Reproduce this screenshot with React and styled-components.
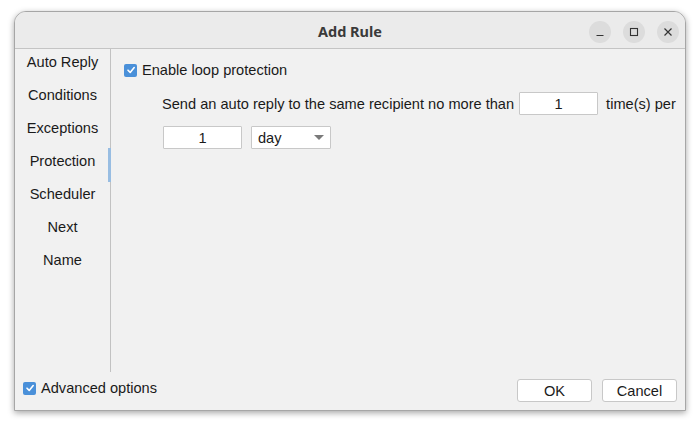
import React from 'react'
import styled, { createGlobalStyle } from 'styled-components'

const Global = createGlobalStyle`
  body {
    margin: 0;
    background: #ffffff;
    font-family: 'Liberation Sans', Arial, sans-serif;
    font-size: 14.6px;
    color: #1a1a1a;
  }
`

const Page = styled.div`
  width: 700px;
  height: 428px;
  padding: 11px 14px 0 14px;
  box-sizing: border-box;
`

const Window = styled.div`
  width: 672px;
  height: 400px;
  display: flex;
  flex-direction: column;
  background: #f1f1f1;
  border: 1px solid #a6a6a6;
  border-radius: 12px 12px 0 0;
  box-sizing: border-box;
  box-shadow: 0 2px 6px rgba(0, 0, 0, 0.35);
  overflow: hidden;
`

const TitleBar = styled.div`
  height: 37px;
  flex: none;
  display: grid;
  grid-template-columns: 1fr auto 1fr;
  align-items: center;
  background: #ebebeb;
  border-bottom: 1px solid #c4c4c4;
  box-sizing: border-box;
`

const Title = styled.div`
  grid-column: 2;
  font-family: 'Noto Sans', 'Open Sans', sans-serif;
  font-weight: 700;
  font-size: 14.5px;
  color: #3a3a3a;
  padding-top: 1px;
`

const Controls = styled.div`
  grid-column: 3;
  justify-self: end;
  display: flex;
  gap: 12px;
  padding-right: 6px;
  padding-top: 4px;
`

const CtrlButton = styled.div`
  width: 22px;
  height: 22px;
  border-radius: 50%;
  background: #dcdcdc;
  display: flex;
  align-items: center;
  justify-content: center;
`

const Body = styled.div`
  flex: 1;
  display: flex;
  flex-direction: column;
`

const Top = styled.div`
  display: flex;
  height: 323px;
`

const Sidebar = styled.div`
  width: 95px;
  flex: none;
  border-right: 1px solid #c2c2c2;
  display: flex;
  flex-direction: column;
`

const NavItem = styled.div`
  position: relative;
  height: 33px;
  padding-bottom: 8px;
  box-sizing: border-box;
  display: flex;
  align-items: center;
  justify-content: center;
  color: #1a1a1a;

  &::after {
    content: '';
    display: ${p => (p.$active ? 'block' : 'none')};
    position: absolute;
    right: -1px;
    top: 0;
    width: 3px;
    height: 34px;
    background: #98bde2;
  }
`

const Content = styled.div`
  flex: 1;
  padding: 13px 0 0 13px;
  display: flex;
  flex-direction: column;
`

const CheckRow = styled.label`
  display: flex;
  align-items: center;
  gap: 5px;
  height: 16px;
  margin-top: ${p => p.$mt || 0}px;
`

const Box = styled.span`
  width: 13px;
  height: 13px;
  border-radius: 2px;
  background: #4a90d9;
  display: flex;
  align-items: center;
  justify-content: center;
`

const Options = styled.div`
  padding: 14px 0 0 38px;
  display: flex;
  flex-direction: column;
  gap: 11px;
`

const Line = styled.div`
  display: flex;
  align-items: center;
  height: 23px;
`

const Field = styled.div`
  width: ${p => p.$w}px;
  height: 23px;
  box-sizing: border-box;
  background: #ffffff;
  border: 1px solid #c8c8c8;
  border-radius: 1px;
  display: flex;
  align-items: center;
  justify-content: ${p => (p.$select ? 'space-between' : 'center')};
  padding: ${p => (p.$select ? '0 6px 0 6px' : '0')};
  margin: ${p => p.$m || '0'};
`

const Bottom = styled.div`
  flex: 1;
  display: flex;
  align-items: flex-start;
  justify-content: space-between;
  padding: 7px 8px 0 8px;
`

const Buttons = styled.div`
  display: flex;
  gap: 10px;
`

const Button = styled.div`
  width: 75px;
  height: 23px;
  box-sizing: border-box;
  background: #ffffff;
  border: 1px solid #c8c8c8;
  border-radius: 3px;
  display: flex;
  align-items: center;
  justify-content: center;
`

const Check = () => (
  <Box>
    <svg width="10" height="10" viewBox="0 0 10 10">
      <path d="M2 5.2 L4.2 7.4 L8.2 2.6" fill="none" stroke="#fff" strokeWidth="1.6" strokeLinecap="round" strokeLinejoin="round" />
    </svg>
  </Box>
)

const nav = ['Auto Reply', 'Conditions', 'Exceptions', 'Protection', 'Scheduler', 'Next', 'Name']

export default function App() {
  return (
    <Page>
      <Global />
      <Window>
        <TitleBar>
          <Title>Add Rule</Title>
          <Controls>
            <CtrlButton>
              <svg width="10" height="10" viewBox="0 0 10 10">
                <path d="M1.5 8.5 H8.5" stroke="#333" strokeWidth="1.2" />
              </svg>
            </CtrlButton>
            <CtrlButton>
              <svg width="10" height="10" viewBox="0 0 10 10">
                <rect x="1.5" y="1.5" width="7" height="7" fill="none" stroke="#333" strokeWidth="1.1" />
              </svg>
            </CtrlButton>
            <CtrlButton>
              <svg width="10" height="10" viewBox="0 0 10 10">
                <path d="M1.5 1.5 L8.5 8.5 M8.5 1.5 L1.5 8.5" stroke="#333" strokeWidth="1.2" />
              </svg>
            </CtrlButton>
          </Controls>
        </TitleBar>
        <Body>
          <Top>
            <Sidebar>
              {nav.map(n => (
                <NavItem key={n} $active={n === 'Protection'}>{n}</NavItem>
              ))}
            </Sidebar>
            <Content>
              <CheckRow>
                <Check />
                Enable loop protection
              </CheckRow>
              <Options>
                <Line>
                  Send an auto reply to the same recipient no more than
                  <Field $w={79} $m="0 8px 0 5px">1</Field>
                  time(s) per
                </Line>
                <Line>
                  <Field $w={79} $m="0 9px 0 1px">1</Field>
                  <Field $w={80} $select>
                    day
                    <svg width="10" height="6" viewBox="0 0 10 6">
                      <path d="M0 0 H10 L5 5 Z" fill="#7a7a7a" />
                    </svg>
                  </Field>
                </Line>
              </Options>
            </Content>
          </Top>
          <Bottom>
            <CheckRow $mt={1}>
              <Check />
              Advanced options
            </CheckRow>
            <Buttons>
              <Button>OK</Button>
              <Button>Cancel</Button>
            </Buttons>
          </Bottom>
        </Body>
      </Window>
    </Page>
  )
}
